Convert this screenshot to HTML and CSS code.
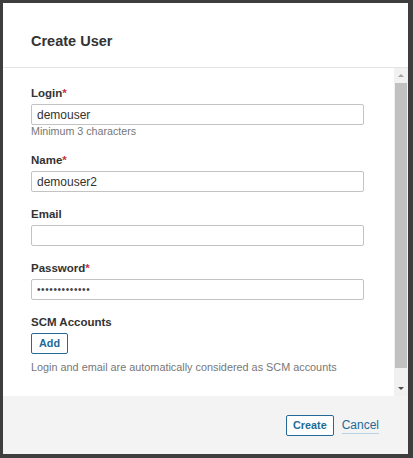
FILE: index.html
```html
<!DOCTYPE html>
<html>
<head>
<meta charset="utf-8">
<link rel="stylesheet" href="styles.css">
</head>
<body>
<div class="modal">
  <div class="modal-header"><h2 class="title">Create User</h2></div>
  <div class="modal-body">
    <div class="content">
      <div class="field">
        <label class="label">Login<span class="req">*</span></label>
        <input class="input" type="text" value="demouser">
        <div class="hint">Minimum 3 characters</div>
      </div>
      <div class="field">
        <label class="label">Name<span class="req">*</span></label>
        <input class="input" type="text" value="demouser2">
      </div>
      <div class="field">
        <label class="label">Email</label>
        <input class="input" type="text" value="">
      </div>
      <div class="field">
        <label class="label">Password<span class="req">*</span></label>
        <input class="input input-password" type="password" value="demouser12345">
      </div>
      <div class="field">
        <label class="label">SCM Accounts</label>
        <button class="btn btn-add">Add</button>
        <div class="hint hint-scm">Login and email are automatically considered as SCM accounts</div>
      </div>
    </div>
    <div class="scrollbar">
      <div class="arrow arrow-up"></div>
      <div class="thumb"></div>
      <div class="arrow arrow-down"></div>
    </div>
  </div>
  <div class="modal-footer">
    <button class="btn">Create</button>
    <a class="link" href="#">Cancel</a>
  </div>
</div>
</body>
</html>
```
FILE: styles.css
```css
html, body { margin: 0; padding: 0; }
body {
  background: #3e3e3e;
  font-family: "Liberation Sans", Arial, sans-serif;
  color: #333;
  width: 413px;
  height: 458px;
  overflow: hidden;
}
.modal {
  margin: 3px 0 0 3px;
  width: 405px;
  height: 451px;
  background: #fff;
  display: flex;
  flex-direction: column;
}
.modal-header {
  border-bottom: 1px solid #e4e4e4;
  padding: 28px 0 0 28px;
  box-sizing: border-box;
  height: 65px;
}
.title {
  margin: 0;
  font-size: 14.5px;
  line-height: 20px;
  font-weight: bold;
  color: #333;
}
.modal-body {
  height: 328px;
  display: flex;
}
.content {
  flex: 1;
  padding: 16px 30px 0 28px;
  overflow: hidden;
}
.field { margin-bottom: 13px; }
.label {
  display: block;
  font-size: 11.5px;
  font-weight: bold;
  line-height: 18px;
  margin-bottom: 2px;
  color: #333;
}
.req { color: #d02f3a; }
.input {
  display: block;
  box-sizing: border-box;
  width: 333px;
  height: 21px;
  margin: 0;
  padding: 0 5px;
  border: 1px solid #c3c3c3;
  border-radius: 2px;
  font-family: "Liberation Sans", Arial, sans-serif;
  font-size: 12px;
  color: #333;
  background: #fff;
  outline: none;
}
.input-password {
  font-size: 10px;
  letter-spacing: 0.6px;
  color: #444;
}
.hint {
  font-size: 10.7px;
  line-height: 13px;
  color: #777;
}
.hint-scm { margin-top: 7px; font-size: 10.85px; }
.btn {
  display: inline-block;
  box-sizing: border-box;
  height: 21px;
  padding: 0 6px;
  margin: 0;
  border: 1px solid #236a97;
  border-radius: 2px;
  background: #fff;
  color: #236a97;
  font-family: "Liberation Sans", Arial, sans-serif;
  font-size: 10.8px;
  font-weight: bold;
  line-height: 19px;
}
.btn-add { padding: 0 7px; }
.scrollbar {
  width: 14px;
  background: #f1f1f1;
  display: flex;
  flex-direction: column;
  align-items: center;
}
.arrow {
  height: 15px;
  width: 14px;
  position: relative;
}
.arrow::after {
  content: "";
  position: absolute;
  left: 4px;
  top: 6px;
  border-left: 3px solid transparent;
  border-right: 3px solid transparent;
}
.arrow-up::after { border-bottom: 3px solid #a3a3a3; }
.arrow-down::after { border-top: 3px solid #505050; }
.thumb {
  flex: 1;
  width: 12px;
  margin: 0 1px 13px 0;
  background: #c1c1c1;
}
.modal-footer {
  flex: 1;
  background: #f3f3f3;
  display: flex;
  justify-content: flex-end;
  align-items: flex-start;
  gap: 8px;
  padding: 19px 29px 0 0;
}
.link {
  font-size: 12px;
  color: #236a97;
  text-decoration: none;
  border-bottom: 1px solid #b9d3e6;
  line-height: 15px;
  margin-top: 3px;
}
```
